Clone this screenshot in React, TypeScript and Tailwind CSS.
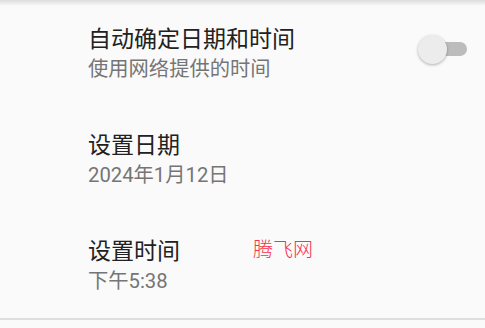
const font = { fontFamily: 'Roboto, "Noto Sans CJK SC", sans-serif' }

function Switch() {
  return (
    <div className="relative h-[30px] w-[50px]">
      <div className="absolute left-[14px] top-[8px] h-[14px] w-[35px] rounded-full bg-[#bcbcbc]" />
      <div className="absolute left-0 top-[1px] h-[29px] w-[29px] rounded-full bg-[#ececec] shadow-[0_1px_3px_rgba(0,0,0,0.3)]" />
    </div>
  )
}

function Row({ title, summary, children }: { title: string; summary: string; children?: React.ReactNode }) {
  return (
    <div className="relative flex h-[106px] items-center pl-[88px] pr-[17px]">
      <div className="flex flex-1 flex-col pt-[1px]">
        <span className="text-[23px] leading-[30px] text-[#212121]">{title}</span>
        <span className="text-[20.3px] leading-[28px] text-[#757575]">{summary}</span>
      </div>
      {children}
    </div>
  )
}

export default function App() {
  return (
    <div className="relative h-[328px] w-[485px] overflow-hidden bg-[#fafafa]" style={font}>
      <div className="absolute inset-x-0 top-0 h-[6px] bg-gradient-to-b from-[#dcdcdc] to-transparent" />
      <div className="border-b-2 border-[#dedede]">
        <Row title="自动确定日期和时间" summary="使用网络提供的时间">
          <div className="-mt-[8px]">
            <Switch />
          </div>
        </Row>
        <Row title="设置日期" summary="2024年1月12日" />
        <Row title="设置时间" summary="下午5:38">
          <span className="absolute left-[253px] top-[24px] text-[20px] font-light leading-[28px] text-[#f5334f]">腾飞网</span>
        </Row>
      </div>
    </div>
  )
}
